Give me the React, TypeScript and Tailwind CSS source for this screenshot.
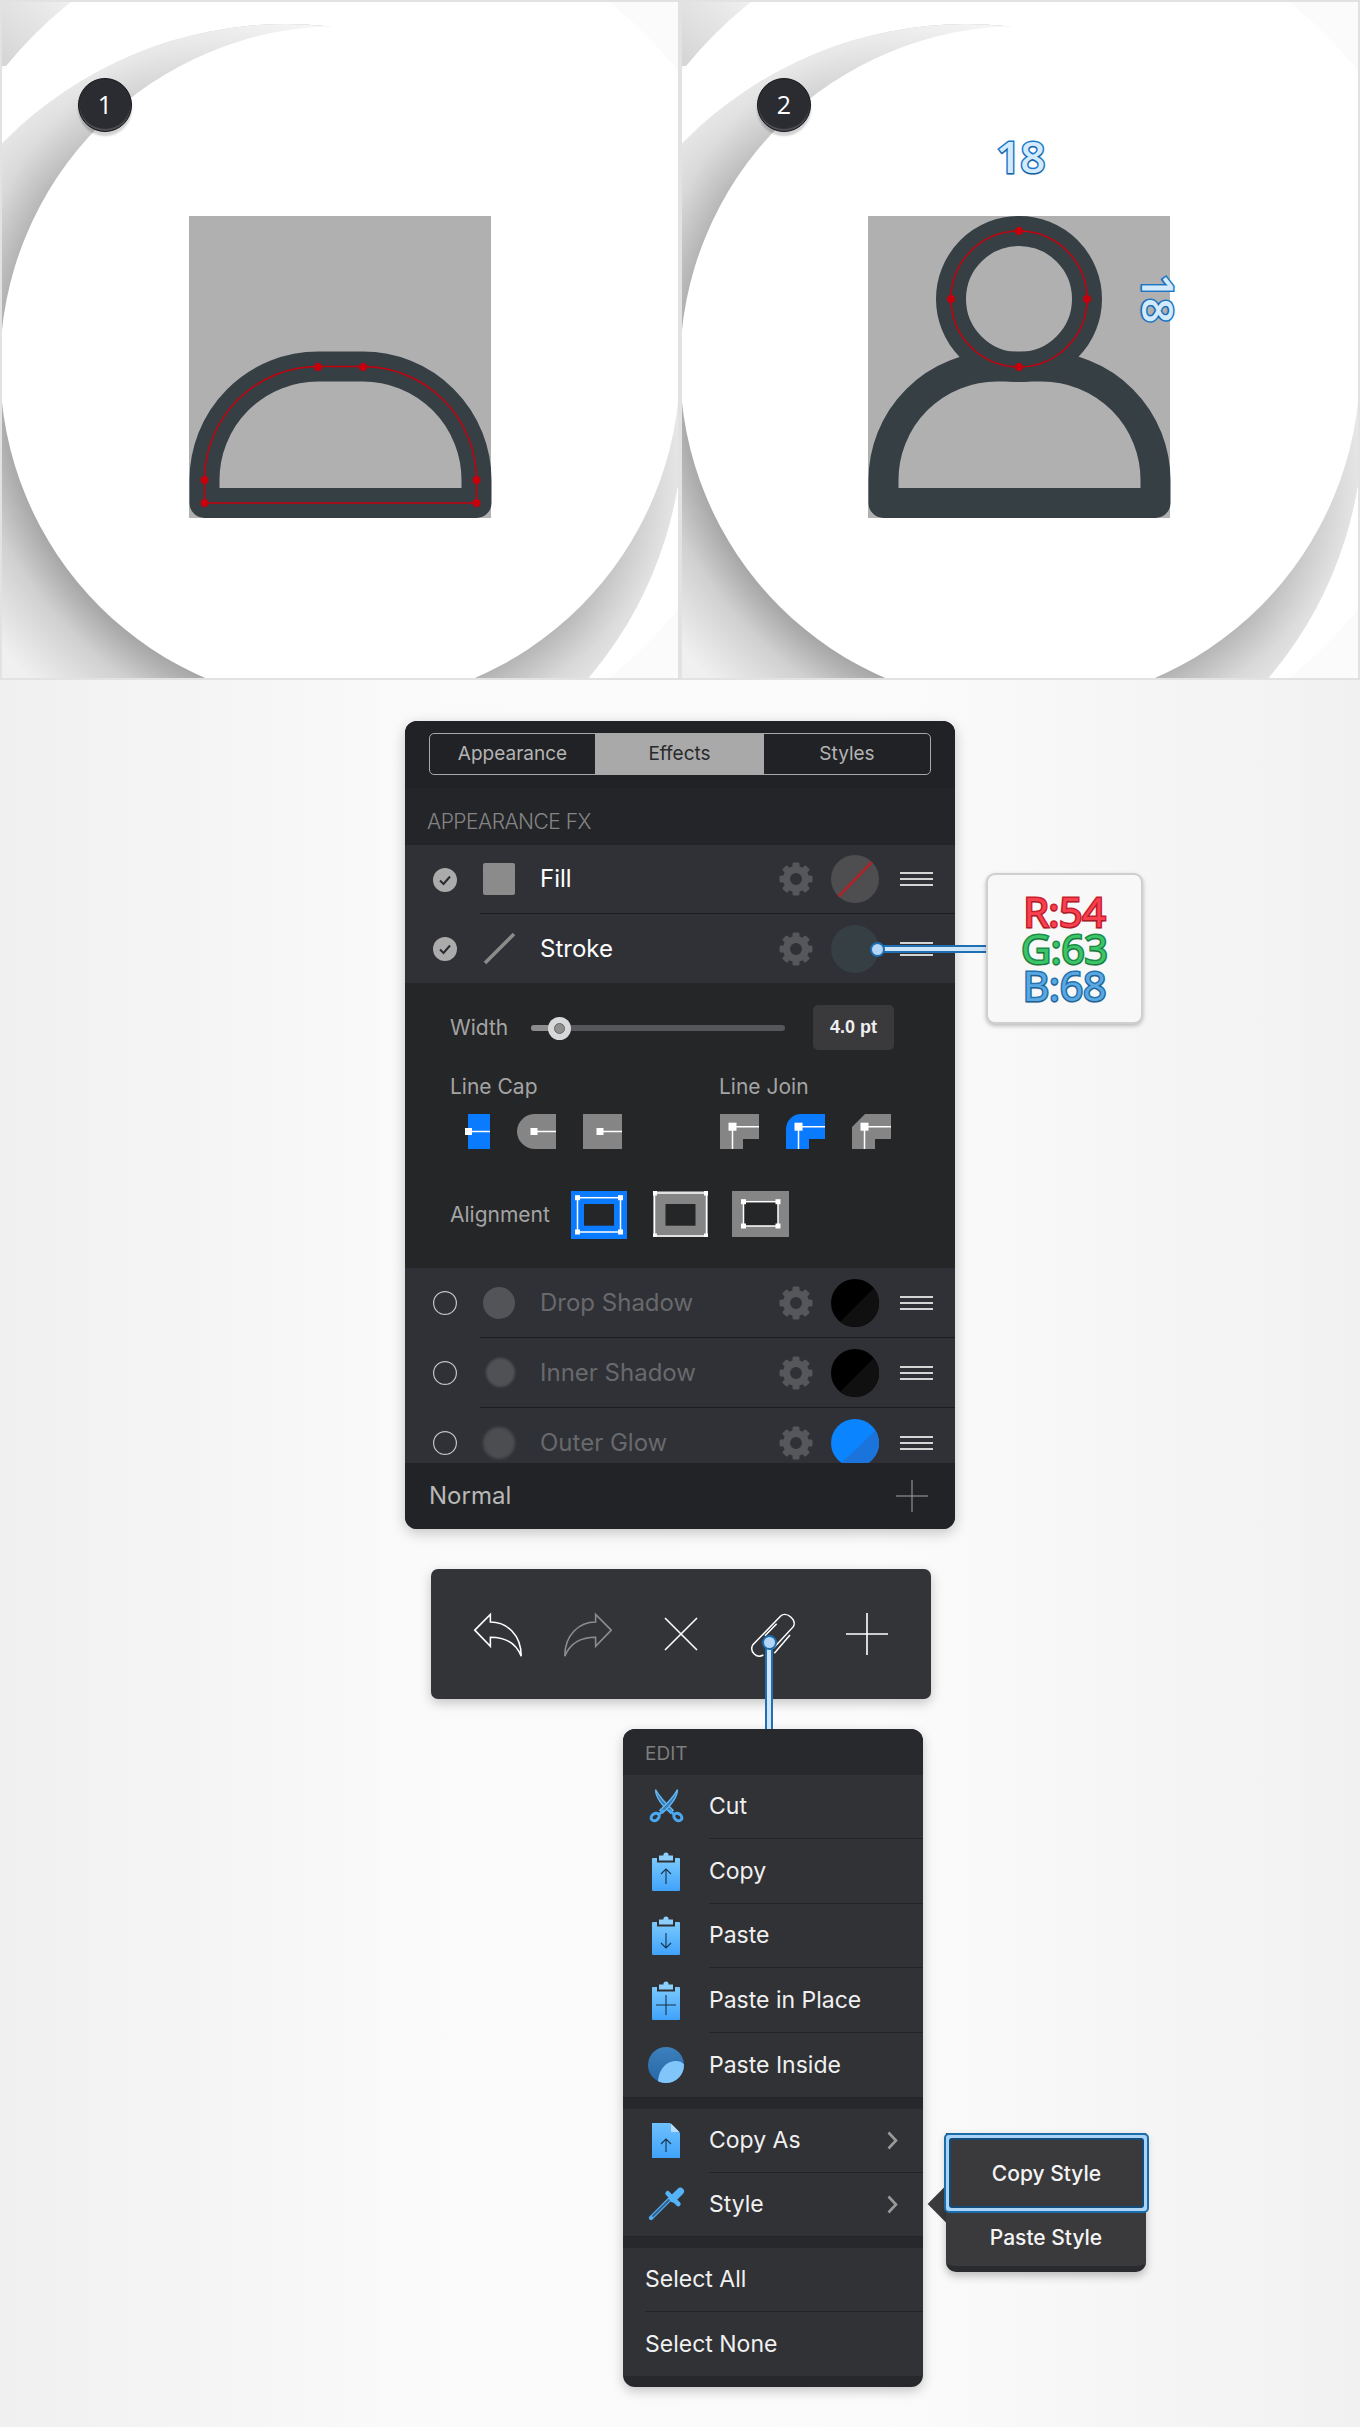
import React from "react";

const STEEL = "#363f44";
const RED = "#c4000c";

function Figure({ id, dx, head }: { id: string; dx: number; head: boolean }) {
  const nodes = head
    ? [[340, 231], [272, 299], [408, 299], [340, 367]]
    : [[318, 367], [363, 367], [204.5, 480], [476.5, 480], [204.5, 503], [476.5, 503]];
  const body = "M204.5 503 V480 A113.5 113.5 0 0 1 318 366.5 H363 A113.5 113.5 0 0 1 476.5 480 V503 Z";
  return (
    <svg className="absolute left-0 top-0" width="680" height="680" viewBox="0 0 680 680">
      <defs>
        <radialGradient id={id + "a"} gradientUnits="userSpaceOnUse" cx="340" cy="366" r="440">
          <stop offset="0.77" stopColor="#a4a4a4" />
          <stop offset="0.86" stopColor="#d0d0d0" />
          <stop offset="1" stopColor="#f0f0f0" />
        </radialGradient>
        <linearGradient id={id + "b"} gradientUnits="userSpaceOnUse" x1="120" y1="640" x2="600" y2="60">
          <stop offset="0" stopColor="#fff" stopOpacity="0" />
          <stop offset="0.4" stopColor="#fff" stopOpacity="0.22" />
          <stop offset="0.85" stopColor="#fff" stopOpacity="1" />
        </linearGradient>
        <linearGradient id={id + "c"} x1="0" y1="1" x2="1" y2="0">
          <stop offset="0" stopColor="#d4d4d4" />
          <stop offset="1" stopColor="#f0f0f0" />
        </linearGradient>
      </defs>
      <rect width="680" height="680" fill="#fbfbfb" />
      <rect width="72" height="66" fill={`url(#${id}c)`} />
      <circle cx="340" cy="340" r="432" fill="#fff" />
      <circle cx="286" cy="421" r="397" fill={`url(#${id}a)`} />
      <circle cx="286" cy="421" r="397" fill={`url(#${id}b)`} />
      <circle cx="340" cy="366" r="340" fill="#fff" />
      <g transform={`translate(${dx} 0)`}>
        <rect x="189" y="216" width="302" height="302" fill="#b0b0b0" />
        {head && <circle cx="340" cy="299" r="68" fill="none" stroke={STEEL} strokeWidth="30" />}
        <path d={body} fill="none" stroke={STEEL} strokeWidth="30" strokeLinejoin="round" />
        {head ? (
          <circle cx="340" cy="299" r="68" fill="none" stroke={RED} strokeWidth="1.5" />
        ) : (
          <path d={body} fill="none" stroke={RED} strokeWidth="1.5" />
        )}
        {nodes.map(([x, y]) => (
          <circle key={`${x}-${y}`} cx={x} cy={y} r="4" fill={RED} />
        ))}
      </g>
    </svg>
  );
}

function Badge({ n, left }: { n: string; left: string }) {
  return (
    <div
      className={`absolute top-[78px] flex h-[54px] w-[54px] items-center justify-center rounded-full border border-[#15161a] bg-[#2a2c32] font-['Open_Sans',sans-serif] text-[25px] text-white shadow-[0_4px_2px_rgba(0,0,0,0.18),inset_0_-2px_1px_rgba(255,255,255,0.18)] ${left}`}
    >
      {n}
    </div>
  );
}

function Panel({ idx }: { idx: number }) {
  const label =
    "font-['Open_Sans',sans-serif] text-[44px] font-semibold leading-[58px] tracking-[-1px] text-[#d3e9fc] [paint-order:stroke_fill] [-webkit-text-stroke:3px_#1a78c8] [text-shadow:0_2px_1px_rgba(0,0,0,0.18)]";
  return (
    <div className="relative h-[680px] w-[680px] overflow-hidden">
      <Figure id={"p" + idx} dx={idx === 1 ? -1 : 0} head={idx === 1} />
      <div className="absolute inset-0 border-2 border-[#e2e2e2]" />
      <Badge n={String(idx + 1)} left={idx === 0 ? "left-[78px]" : "left-[77px]"} />
      {idx === 1 && (
        <>
          <div className={`absolute left-[316px] top-[127px] ${label}`}>18</div>
          <div className={`absolute left-[455px] top-[269px] rotate-90 ${label}`}>18</div>
        </>
      )}
    </div>
  );
}

function Gear() {
  const angles = [0, 45, 90, 135, 180, 225, 270, 315];
  return (
    <svg width="34" height="34" viewBox="0 0 34 34" className="shrink-0">
      <g fill="#56575b">
        {angles.map((a) => (
          <rect key={a} x="13.5" y="0.5" width="7" height="9" rx="1.5" transform={`rotate(${a} 17 17)`} />
        ))}
      </g>
      <circle cx="17" cy="17" r="9.5" fill="none" stroke="#56575b" strokeWidth="7" />
    </svg>
  );
}

function Swatch({ kind }: { kind: "fill" | "stroke" | "black" | "blue" }) {
  return (
    <svg width="48" height="48" viewBox="0 0 48 48" className="shrink-0">
      <defs>
        <clipPath id={"sw" + kind}>
          <circle cx="24" cy="24" r="24" />
        </clipPath>
      </defs>
      <g clipPath={`url(#sw${kind})`}>
        {kind === "fill" && (
          <>
            <rect width="48" height="48" fill="#4e4e50" />
            <line x1="41" y1="7" x2="7" y2="42" stroke="#a8262c" strokeWidth="3" />
          </>
        )}
        {kind === "stroke" && <rect width="48" height="48" fill="#363f44" />}
        {kind === "black" && (
          <>
            <rect width="48" height="48" fill="#000" />
            <path d="M48 4 L48 48 L4 48 Z" fill="#101011" />
          </>
        )}
        {kind === "blue" && (
          <>
            <rect width="48" height="48" fill="#0a84ff" />
            <path d="M48 8 L48 48 L6 48 Z" fill="#1b74dc" />
          </>
        )}
      </g>
    </svg>
  );
}

function Burger() {
  return (
    <div className="flex h-[14px] w-[33px] shrink-0 flex-col justify-between">
      <div className="h-[2px] bg-[#d4d4d4]" />
      <div className="h-[2px] bg-[#d4d4d4]" />
      <div className="h-[2px] bg-[#d4d4d4]" />
    </div>
  );
}

function Check({ on }: { on: boolean }) {
  return on ? (
    <svg width="24" height="24" viewBox="0 0 24 24">
      <circle cx="12" cy="12" r="12" fill="#ababab" />
      <path d="M7 12.5 L10.5 16 L17 8.5" fill="none" stroke="#2a2b2e" strokeWidth="2" />
    </svg>
  ) : (
    <svg width="24" height="24" viewBox="0 0 24 24">
      <circle cx="12" cy="12" r="11.4" fill="none" stroke="#c4c4c4" strokeWidth="1.2" />
    </svg>
  );
}

function RowIcon({ kind }: { kind: string }) {
  if (kind === "fill") return <div className="h-[32px] w-[32px] rounded-[2px] bg-[#8b8b8b]" />;
  if (kind === "stroke")
    return (
      <svg width="33" height="33" viewBox="0 0 33 33">
        <line x1="2" y1="31" x2="31" y2="2" stroke="#8b8b8b" strokeWidth="3.5" />
      </svg>
    );
  if (kind === "drop") return <div className="h-[32px] w-[32px] rounded-full bg-[#535457]" />;
  if (kind === "inner") return <div className="ml-[3px] h-[29px] w-[29px] rounded-full bg-[#505154] blur-[1px]" />;
  return <div className="h-[32px] w-[32px] rounded-full bg-[#4c4d50] blur-[1.5px]" />;
}

function FxRow({
  label,
  icon,
  swatch,
  on,
  last,
  h,
}: {
  label: string;
  icon: string;
  swatch: "fill" | "stroke" | "black" | "blue";
  on: boolean;
  last?: boolean;
  h: string;
}) {
  return (
    <div className={`flex bg-[#303136] ${h}`}>
      <div className="flex w-[75px] items-center justify-center pl-[5px]">
        <Check on={on} />
      </div>
      <div className={`flex min-w-0 flex-1 items-center pr-[22px] ${last ? "" : "border-b border-[#1c1d20]"}`}>
        <div className="w-[60px] pl-[3px]">
          <RowIcon kind={icon} />
        </div>
        <div className={`flex-1 text-[24px] ${on ? "text-white" : "text-[#68696c]"}`}>{label}</div>
        <Gear />
        <div className="ml-[18px]">
          <Swatch kind={swatch} />
        </div>
        <div className="ml-[21px]">
          <Burger />
        </div>
      </div>
    </div>
  );
}

function Node({ x, y, s = 7 }: { x: number; y: number; s?: number }) {
  return <rect x={x - s / 2} y={y - s / 2} width={s} height={s} fill="#fff" />;
}

function CapIcon({ w, d, fill, nx }: { w: number; d: string; fill: string; nx: number }) {
  return (
    <svg width={w} height="35" viewBox={`0 0 ${w} 35`} className="overflow-visible">
      <path d={d} fill={fill} />
      <line x1={nx} y1="17.5" x2={w} y2="17.5" stroke="#fff" strokeWidth="1.5" />
      <Node x={nx} y={17.5} />
    </svg>
  );
}

function JoinIcon({ d, fill }: { d: string; fill: string }) {
  return (
    <svg width="39" height="35" viewBox="0 0 39 35">
      <path d={d} fill={fill} />
      <path d="M39 12.7 H12.5 V35" fill="none" stroke="#fff" strokeWidth="1.5" />
      <Node x={12.5} y={12.7} s={8} />
    </svg>
  );
}

function AlignIcon({
  w,
  h,
  fill,
  inner,
  line,
}: {
  w: number;
  h: number;
  fill: string;
  inner: number[];
  line: number[];
}) {
  const [ix, iy, iw, ih] = inner;
  const [lx, ly, lw, lh] = line;
  return (
    <svg width={w} height={h} viewBox={`0 0 ${w} ${h}`} className="shrink-0">
      <rect width={w} height={h} fill={fill} />
      <rect x={ix} y={iy} width={iw} height={ih} fill="#252628" />
      <rect x={lx} y={ly} width={lw} height={lh} fill="none" stroke="#fff" strokeWidth="1.5" />
      <Node x={lx} y={ly} s={5} />
      <Node x={lx + lw} y={ly} s={5} />
      <Node x={lx} y={ly + lh} s={5} />
      <Node x={lx + lw} y={ly + lh} s={5} />
    </svg>
  );
}

function StrokeOptions() {
  return (
    <div className="h-[285px] bg-[#252628] pl-[45px] pt-[22px] text-[21px] text-[#a4a4a4]">
      <div className="flex h-[45px] items-center">
        <div className="w-[81px]">Width</div>
        <div className="relative h-[6px] w-[254px] rounded-full bg-[#56575a]">
          <div className="h-[6px] w-[28px] rounded-l-full bg-[#8c8c8c]" />
          <div className="absolute left-[17px] top-[-8px] flex h-[23px] w-[23px] items-center justify-center rounded-full bg-[#d8d8d8]">
            <div className="h-[11px] w-[11px] rounded-full border border-[#666] bg-[#8f8f8f]" />
          </div>
        </div>
        <div className="ml-[28px] flex h-[45px] w-[81px] items-center justify-center rounded-[5px] bg-[#3a3a3c] font-['Liberation_Sans',sans-serif] text-[18px] font-bold text-[#efefef]">
          4.0 pt
        </div>
      </div>
      <div className="mt-[24px] flex">
        <div className="w-[269px]">
          <div className="h-[26px] leading-[26px]">Line Cap</div>
          <div className="ml-[18px] mt-[14px] flex gap-[27px]">
            <CapIcon w={22} d="M0 0 H22 V35 H0 Z" fill="#0a7bff" nx={0.5} />
            <CapIcon w={39} d="M18 0 H39 V35 H18 A18 17.5 0 0 1 18 0 Z" fill="#858585" nx={17} />
            <CapIcon w={39} d="M0 0 H39 V35 H0 Z" fill="#858585" nx={17} />
          </div>
        </div>
        <div>
          <div className="h-[26px] leading-[26px]">Line Join</div>
          <div className="ml-[1px] mt-[14px] flex gap-[27px]">
            <JoinIcon d="M0 0 H39 V25 H23 V35 H0 Z" fill="#858585" />
            <JoinIcon d="M0 35 V15 A15 15 0 0 1 15 0 H39 V25 H23 V35 Z" fill="#0a7bff" />
            <JoinIcon d="M0 35 V13 L13 0 H39 V25 H23 V35 Z" fill="#858585" />
          </div>
        </div>
      </div>
      <div className="mt-[42px] flex items-start">
        <div className="flex h-[48px] w-[121px] items-center">Alignment</div>
        <AlignIcon w={56} h={48} fill="#0a7bff" inner={[13, 13, 30, 21.7]} line={[6.5, 6.7, 43, 34.3]} />
        <div className="ml-[26px]">
          <AlignIcon w={55} h={46} fill="#858585" inner={[12.5, 13, 30, 21.7]} line={[1.5, 2, 52, 43]} />
        </div>
        <div className="ml-[24px]">
          <AlignIcon w={57} h={46} fill="#858585" inner={[11.5, 10.7, 34.5, 24.3]} line={[11.5, 10.7, 34.5, 24.3]} />
        </div>
      </div>
    </div>
  );
}

function AppearancePanel() {
  const tab = "flex items-center justify-center text-[19px]";
  return (
    <div className="ml-[405px] mt-[41px] w-[550px] overflow-hidden rounded-[12px] bg-[#242528] shadow-[0_4px_14px_rgba(0,0,0,0.22)]">
      <div className="h-[67px] bg-[#212225] px-[24px] pt-[12px]">
        <div className="flex h-[42px] overflow-hidden rounded-[5px] border border-[#a8a8a8] text-[#b4b4b4]">
          <div className={`${tab} w-[165px]`}>Appearance</div>
          <div className={`${tab} w-[169px] bg-[#a9a9a9] text-[#2a2a2c]`}>Effects</div>
          <div className={`${tab} flex-1`}>Styles</div>
        </div>
      </div>
      <div className="flex h-[57px] items-center pl-[22px] pt-[10px] text-[21px] font-light tracking-[-0.5px] text-[#848484]">
        APPEARANCE FX
      </div>
      <FxRow h="h-[69px]" label="Fill" icon="fill" swatch="fill" on />
      <FxRow h="h-[69px]" label="Stroke" icon="stroke" swatch="stroke" on last />
      <StrokeOptions />
      <div className="h-[195px] overflow-hidden">
        <FxRow h="h-[70px]" label="Drop Shadow" icon="drop" swatch="black" on={false} />
        <FxRow h="h-[70px]" label="Inner Shadow" icon="inner" swatch="black" on={false} />
        <FxRow h="h-[70px]" label="Outer Glow" icon="glow" swatch="blue" on={false} last />
      </div>
      <div className="flex h-[66px] items-center justify-between bg-[#222326] pl-[24px] pr-[27px] text-[24px] text-[#b8b8b8]">
        <span>Normal</span>
        <svg width="32" height="32" viewBox="0 0 32 32">
          <path d="M16 0 V32 M0 16 H32" stroke="#a4a4a4" strokeWidth="1" />
        </svg>
      </div>
    </div>
  );
}

function Toolbar() {
  const arrow = "M158 237 L203 190 V213 C250 213 292 250 292 315 C275 270 240 258 203 258 V285 Z";
  return (
    <div className="ml-[431px] mt-[40px] flex h-[130px] w-[500px] items-center rounded-[7px] bg-[#333438] pl-[41px] shadow-[0_4px_12px_rgba(0,0,0,0.22)]">
      <svg width="52" height="47" viewBox="150 180 150 140" preserveAspectRatio="none">
        <path d={arrow} fill="none" stroke="#fff" strokeWidth="4.5" />
      </svg>
      <svg width="52" height="47" viewBox="150 180 150 140" preserveAspectRatio="none" className="ml-[38px] -scale-x-100">
        <path d={arrow} fill="none" stroke="#8d8d8f" strokeWidth="4.5" />
      </svg>
      <svg width="34" height="34" viewBox="0 0 34 34" className="ml-[50px]">
        <path d="M1 1 L33 33 M33 1 L1 33" stroke="#fff" strokeWidth="1.6" />
      </svg>
      <svg width="70" height="70" viewBox="0 0 210 210" className="ml-[42px] mt-[12px]">
        <path
          d="M70 150 C50 162 28 140 38 120 L122 33 C140 18 172 45 160 65 L100 130 M150 90 L103 145 M110 56 L75 92"
          fill="none"
          stroke="#fff"
          strokeWidth="4.5"
        />
      </svg>
      <svg width="42" height="42" viewBox="0 0 42 42" className="ml-[36px]">
        <path d="M21 0 V42 M0 21 H42" stroke="#fff" strokeWidth="1.6" />
      </svg>
    </div>
  );
}

function Clipboard({ sign, id }: { sign: string; id: string }) {
  return (
    <svg width="28" height="39" viewBox="0 0 28 39">
      <defs>
        <linearGradient id={id} x1="0" y1="0" x2="0" y2="1">
          <stop offset="0" stopColor="#7ccafd" />
          <stop offset="1" stopColor="#3fa2fa" />
        </linearGradient>
      </defs>
      <rect x="0" y="6" width="28" height="33" rx="1" fill={`url(#${id})`} />
      <rect x="5" y="4" width="18" height="6.5" fill="#2f3034" />
      <rect x="7" y="3.5" width="14" height="5" fill="#8ccffd" />
      <circle cx="14" cy="3" r="2.6" fill="#8ccffd" />
      <path d={sign} fill="none" stroke="#16324d" strokeWidth="1.1" />
    </svg>
  );
}

function Scissors() {
  return (
    <svg width="37" height="38" viewBox="25 25 110 114">
      <path d="M47 30 C47 52 68 78 92 100 L100 92 C78 72 58 50 47 30 Z" fill="#3a7db5" stroke="#62b8f5" strokeWidth="4" />
      <path d="M113 30 C113 52 92 78 68 100 L60 92 C82 72 102 50 113 30 Z" fill="#3a7db5" stroke="#62b8f5" strokeWidth="4" />
      <ellipse cx="46" cy="112" rx="13" ry="10" fill="none" stroke="#4aa9f2" strokeWidth="9" transform="rotate(-35 46 112)" />
      <ellipse cx="114" cy="112" rx="13" ry="10" fill="none" stroke="#4aa9f2" strokeWidth="9" transform="rotate(35 114 112)" />
      <path d="M58 104 L72 92 M102 104 L88 92" stroke="#4aa9f2" strokeWidth="8" />
    </svg>
  );
}

function PasteInside() {
  return (
    <svg width="36" height="36" viewBox="0 0 36 36">
      <defs>
        <clipPath id="pi">
          <circle cx="18" cy="18" r="18" />
        </clipPath>
        <linearGradient id="pig" x1="0" y1="0" x2="0" y2="1">
          <stop offset="0" stopColor="#3c80bd" />
          <stop offset="1" stopColor="#2667a4" />
        </linearGradient>
      </defs>
      <g clipPath="url(#pi)">
        <rect width="36" height="36" fill="url(#pig)" />
        <path d="M10 36 C10 23 18 14 28 14 C32 14 36 16 37 19 V36 Z" fill="#81c6fb" />
      </g>
    </svg>
  );
}

function DocIcon() {
  return (
    <svg width="28" height="35" viewBox="0 0 28 35">
      <defs>
        <linearGradient id="dg" x1="0" y1="0" x2="0" y2="1">
          <stop offset="0" stopColor="#6fc0fc" />
          <stop offset="1" stopColor="#40a3fa" />
        </linearGradient>
      </defs>
      <path d="M0 0 H18 L28 10 V35 H0 Z" fill="url(#dg)" />
      <path d="M19 0.5 L27.5 9 H19 Z" fill="#b7defd" />
      <path d="M14 29 V16 M9 21 L14 16 L19 21" fill="none" stroke="#16324d" strokeWidth="1.1" />
    </svg>
  );
}

function Dropper() {
  return (
    <svg width="38" height="38" viewBox="20 209 114 114">
      <path d="M32 308 L88 252" stroke="#55aef0" strokeWidth="13" strokeLinecap="round" />
      <path d="M36 304 L88 252" stroke="#2c5f92" strokeWidth="6" />
      <path d="M82 234 L114 266" stroke="#55b4f8" strokeWidth="14" strokeLinecap="round" />
      <path d="M98 250 L120 228" stroke="#55b4f8" strokeWidth="22" strokeLinecap="round" />
    </svg>
  );
}

function Chevron() {
  return (
    <svg width="11" height="19" viewBox="0 0 11 19">
      <path d="M1.5 1.5 L9 9.5 L1.5 17.5" fill="none" stroke="#9a9a9a" strokeWidth="2.6" />
    </svg>
  );
}

function MenuRow({
  label,
  icon,
  chevron,
  h,
  last,
}: {
  label: string;
  icon?: React.ReactNode;
  chevron?: boolean;
  h: string;
  last?: boolean;
}) {
  return (
    <div className={`flex ${h} bg-[#313236]`}>
      {icon ? (
        <div className="flex w-[86px] shrink-0 items-center justify-center">{icon}</div>
      ) : (
        <div className="w-[22px] shrink-0" />
      )}
      <div
        className={`flex flex-1 items-center justify-between pr-[25px] text-[23px] text-[#f0f0f0] ${last ? "" : "border-b border-[#232427]"}`}
      >
        <span>{label}</span>
        {chevron && <Chevron />}
      </div>
    </div>
  );
}

function EditMenu() {
  return (
    <div className="relative ml-[623px] mt-[30px] w-[300px] rounded-[12px] bg-[#27282b] shadow-[0_4px_12px_rgba(0,0,0,0.22)]">
      <div className="flex h-[46px] items-center rounded-t-[12px] bg-[#28292c] pl-[22px] pt-[4px] text-[19px] text-[#7e7e7e]">
        EDIT
      </div>
      <MenuRow h="h-[64.4px]" label="Cut" icon={<Scissors />} />
      <MenuRow h="h-[64.4px]" label="Copy" icon={<Clipboard id="c1" sign="M14 32 V17 M9 22 L14 17 L19 22" />} />
      <MenuRow h="h-[64.4px]" label="Paste" icon={<Clipboard id="c2" sign="M14 17 V32 M9 27 L14 32 L19 27" />} />
      <MenuRow h="h-[64.4px]" label="Paste in Place" icon={<Clipboard id="c3" sign="M14 14 V34 M4 24 H24" />} />
      <MenuRow h="h-[64.4px]" label="Paste Inside" icon={<PasteInside />} last />
      <div className="h-[12px] border-t border-[#232427]" />
      <MenuRow h="h-[64px]" label="Copy As" icon={<DocIcon />} chevron />
      <MenuRow h="h-[63px]" label="Style" icon={<Dropper />} chevron last />
      <div className="h-[12px] border-t border-[#232427]" />
      <MenuRow h="h-[64px]" label="Select All" />
      <MenuRow h="h-[64px]" label="Select None" last />
      <div className="h-[11px] rounded-b-[12px]" />

      <div className="absolute left-[310px] top-[462px] h-[26px] w-[26px] rotate-45 bg-[#3a3a3c]" />
      <div className="absolute left-[323px] top-[404px] flex h-[139px] w-[200px] flex-col rounded-b-[10px] border-b-[6px] border-[#2a2b2e] bg-[#3a3a3c] shadow-[0_4px_8px_rgba(0,0,0,0.25)]">
        <div className="-ml-[2px] h-[80px] w-[205px] shrink-0 rounded-[5px] border-2 border-[#1a6cab] bg-[#a9d3f7] p-[3px]">
          <div className="flex h-full items-center justify-center rounded-[3px] border-2 border-[#134a7a] bg-[#3a3a3c] pt-[2px] text-[21px] font-medium text-[#f4f4f4]">
            Copy Style
          </div>
        </div>
        <div className="flex flex-1 items-center justify-center pb-[4px] text-[21px] font-medium text-[#f4f4f4]">
          Paste Style
        </div>
      </div>
    </div>
  );
}

function RgbCard() {
  const line = "h-[37px] leading-[37px] [paint-order:stroke_fill] [text-shadow:0_2px_1px_rgba(0,0,0,0.15)]";
  return (
    <div className="absolute left-[986px] top-[873px] flex h-[151px] w-[157px] flex-col items-center justify-center rounded-[9px] border-2 border-[#cfcfcf] bg-[#f8f8f8] font-['Open_Sans',sans-serif] text-[41px] font-medium tracking-[-0.2px] shadow-[0_2px_4px_rgba(0,0,0,0.25)]">
      <div className={`${line} text-[#f8404f] [-webkit-text-stroke:3px_#c81f2e]`}>R:54</div>
      <div className={`${line} text-[#3cc468] [-webkit-text-stroke:3px_#1d8c48]`}>G:63</div>
      <div className={`${line} text-[#5aa8e2] [-webkit-text-stroke:3px_#2472ad]`}>B:68</div>
    </div>
  );
}

function Pin({ cls }: { cls: string }) {
  return (
    <div className={`absolute h-[15px] w-[15px] rounded-full border-[2px] border-[#1c6cb0] bg-[#b4d5f6] ${cls}`} />
  );
}

export default function App() {
  return (
    <div className="relative h-[2427px] w-[1360px] overflow-hidden bg-[linear-gradient(90deg,#f0f0f0,#fafafa_30%,#fbfbfb_65%,#f1f1f1)] font-[Inter,sans-serif]">
      <div className="flex">
        <Panel idx={0} />
        <Panel idx={1} />
      </div>
      <div className="relative">
        <AppearancePanel />
        <Toolbar />
        <EditMenu />
      </div>
      <div className="absolute left-[877px] top-[945px] h-[8px] w-[110px] border-y-2 border-[#1f6fb2] bg-[#cfe5fa]" />
      <Pin cls="left-[870px] top-[941.5px]" />
      <div className="absolute left-[765px] top-[1642px] h-[87px] w-[8px] border-x-2 border-[#1f6fb2] bg-[#cfe5fa]" />
      <Pin cls="left-[761.5px] top-[1634.5px]" />
      <RgbCard />
    </div>
  );
}
